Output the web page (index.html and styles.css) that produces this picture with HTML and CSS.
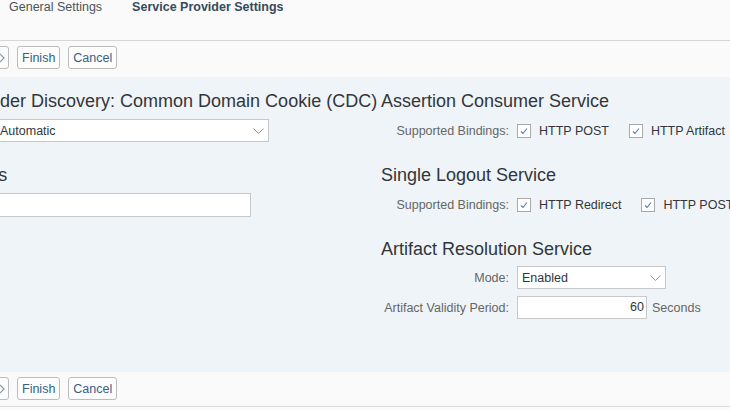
FILE: index.html
```html
<!DOCTYPE html>
<html lang="en">
<head>
<meta charset="utf-8">
<title>Service Provider Settings</title>
<link rel="stylesheet" href="styles.css">
</head>
<body>
<div class="viewport">
  <div class="page">
    <div class="tabbar">
      <span class="tab">General Settings</span>
      <span class="tab tab-active">Service Provider Settings</span>
    </div>

    <div class="toolbar">
      <button class="btn btn-next" aria-label="Next"><svg width="6" height="10" viewBox="0 0 6 10"><path d="M1 1 L5 5 L1 9" fill="none" stroke="#8a9bb0" stroke-width="1.2"/></svg></button>
      <button class="btn">Finish</button>
      <button class="btn">Cancel</button>
    </div>

    <div class="content">
      <div class="col col-left">
        <section class="group">
          <h2 class="heading">Identity Provider Discovery: Common Domain Cookie (CDC)</h2>
          <div class="row-left">
            <div class="select select-wide">
              <span>Automatic</span>
              <svg width="11" height="6" viewBox="0 0 11 6"><path d="M0.5 0.5 L5.5 5.5 L10.5 0.5" fill="none" stroke="#8899aa" stroke-width="1"/></svg>
            </div>
          </div>
        </section>
        <section class="group">
          <h2 class="heading">Trusted Hosts</h2>
          <div class="row-left">
            <div class="input input-wide"></div>
          </div>
        </section>
      </div>

      <div class="col col-right">
        <section class="group">
          <h2 class="heading">Assertion Consumer Service</h2>
          <div class="row">
            <span class="label">Supported Bindings:</span>
            <div class="checks">
              <span class="check"><span class="box"><svg width="12" height="12" viewBox="0 0 12 12"><path d="M3 6.5 L5 8.5 L9 3.5" fill="none" stroke="#4a7eb0" stroke-width="1.1"/></svg></span>HTTP POST</span>
              <span class="check"><span class="box"><svg width="12" height="12" viewBox="0 0 12 12"><path d="M3 6.5 L5 8.5 L9 3.5" fill="none" stroke="#4a7eb0" stroke-width="1.1"/></svg></span>HTTP Artifact</span>
            </div>
          </div>
        </section>
        <section class="group">
          <h2 class="heading">Single Logout Service</h2>
          <div class="row">
            <span class="label">Supported Bindings:</span>
            <div class="checks">
              <span class="check"><span class="box"><svg width="12" height="12" viewBox="0 0 12 12"><path d="M3 6.5 L5 8.5 L9 3.5" fill="none" stroke="#4a7eb0" stroke-width="1.1"/></svg></span>HTTP Redirect</span>
              <span class="check"><span class="box"><svg width="12" height="12" viewBox="0 0 12 12"><path d="M3 6.5 L5 8.5 L9 3.5" fill="none" stroke="#4a7eb0" stroke-width="1.1"/></svg></span>HTTP POST</span>
            </div>
          </div>
        </section>
        <section class="group group-last">
          <h2 class="heading">Artifact Resolution Service</h2>
          <div class="rows">
            <div class="row">
              <span class="label">Mode:</span>
              <div class="select select-mode">
                <span>Enabled</span>
                <svg width="11" height="6" viewBox="0 0 11 6"><path d="M0.5 0.5 L5.5 5.5 L10.5 0.5" fill="none" stroke="#8899aa" stroke-width="1"/></svg>
              </div>
            </div>
            <div class="row">
              <span class="label">Artifact Validity Period:</span>
              <div class="field-unit">
                <div class="input input-num">60</div>
                <span class="unit">Seconds</span>
              </div>
            </div>
          </div>
        </section>
      </div>
    </div>

    <div class="toolbar toolbar-bottom">
      <button class="btn btn-next" aria-label="Next"><svg width="6" height="10" viewBox="0 0 6 10"><path d="M1 1 L5 5 L1 9" fill="none" stroke="#8a9bb0" stroke-width="1.2"/></svg></button>
      <button class="btn">Finish</button>
      <button class="btn">Cancel</button>
    </div>
  </div>
</div>
</body>
</html>
```

FILE: styles.css
```css
body {
  margin: 0;
  font-family: "Liberation Sans", Arial, sans-serif;
  background: #fbfbfb;
  color: #32363a;
}

.viewport {
  width: 730px;
  height: 410px;
  overflow: hidden;
}

.page {
  width: 900px;
  margin-left: -104px;
}

.tabbar {
  height: 40px;
  border-bottom: 1px solid #d6d6d6;
  display: flex;
  align-items: flex-start;
  gap: 30px;
  padding-left: 113px;
  background: #fafafa;
}

.tab {
  font-size: 12.5px;
  line-height: 14px;
  color: #4d5359;
}

.tab-active {
  font-weight: bold;
  color: #354a5f;
}

.toolbar {
  height: 36px;
  box-sizing: border-box;
  padding: 5px 0 0 67px;
  display: flex;
  align-items: flex-start;
  gap: 8px;
  background: #fafafa;
}

.toolbar-bottom {
  height: 35px;
  border-bottom: 1px solid #dcdcdc;
}

.btn {
  height: 23px;
  box-sizing: border-box;
  border: 1px solid #bcbcbc;
  border-radius: 3px;
  background: #fdfdfd;
  color: #346187;
  font-family: inherit;
  font-size: 12.5px;
  padding: 0 4px;
  display: flex;
  align-items: center;
}

.btn-next {
  width: 46px;
  justify-content: flex-end;
  padding-right: 3px;
}

.content {
  height: 295px;
  box-sizing: border-box;
  padding-top: 13px;
  background: #eff4f8;
  display: grid;
  grid-template-columns: 485px 1fr;
}

.group + .group {
  margin-top: 22px;
}

.heading {
  margin: 0 0 7px;
  font-size: 18px;
  font-weight: normal;
  line-height: 22px;
  color: #32363a;
  white-space: nowrap;
}

.group-last .heading {
  margin-bottom: 6px;
}

.rows {
  display: flex;
  flex-direction: column;
  gap: 7px;
}

.row {
  display: grid;
  grid-template-columns: 128px auto;
  column-gap: 8px;
  align-items: center;
  height: 23px;
}

.row-left {
  padding-left: 98px;
}

.label {
  text-align: right;
  color: #666666;
  font-size: 12.5px;
  white-space: nowrap;
}

.checks {
  display: flex;
  gap: 20px;
  white-space: nowrap;
}

.check {
  display: flex;
  align-items: center;
  gap: 8px;
  font-size: 12.5px;
  color: #32363a;
}

.box {
  width: 14px;
  height: 14px;
  box-sizing: border-box;
  border: 1px solid #a9a9a9;
  background: #ffffff;
  display: flex;
  align-items: center;
  justify-content: center;
}

.select {
  height: 23px;
  box-sizing: border-box;
  border: 1px solid #c8c8c8;
  background: #ffffff;
  display: flex;
  align-items: center;
  justify-content: space-between;
  padding: 0 4px 0 5px;
  font-size: 12.5px;
  color: #32363a;
}

.select-wide {
  width: 275px;
}

.select-mode {
  width: 149px;
  padding-left: 4px;
}

.input {
  height: 23px;
  box-sizing: border-box;
  border: 1px solid #c8c8c8;
  background: #ffffff;
  font-size: 12.5px;
  color: #32363a;
}

.input-wide {
  width: 257px;
  height: 24px;
}

.input-num {
  width: 130px;
  text-align: right;
  padding-right: 2px;
  line-height: 21px;
}

.field-unit {
  display: flex;
  align-items: center;
  gap: 5px;
}

.unit {
  font-size: 12.5px;
  color: #666666;
}
```
